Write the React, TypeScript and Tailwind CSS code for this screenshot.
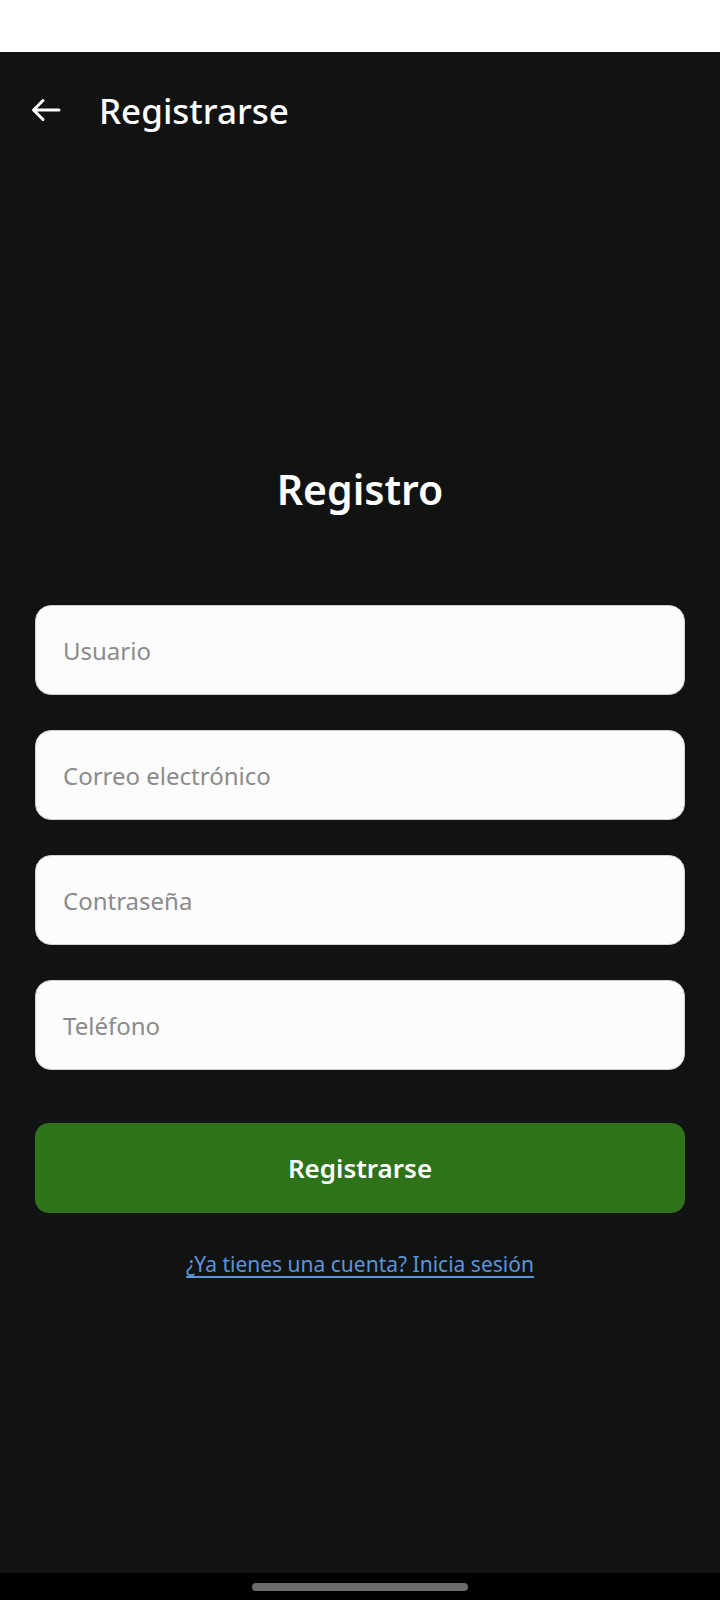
import React from 'react'

const fields = ['Usuario', 'Correo electrónico', 'Contraseña', 'Teléfono']

export default function App() {
  return (
    <div className="flex h-[1600px] w-[720px] flex-col bg-[#111212] font-['Noto_Sans',sans-serif]">
      {/* status bar */}
      <div className="h-[52px] bg-white" />

      <main className="flex flex-1 flex-col">
        {/* app bar */}
        <div className="flex h-[116px] items-center">
          <button className="ml-[31px] flex h-[30px] w-[30px] items-center justify-center">
            <svg width="30" height="24" viewBox="0 0 30 24" fill="none">
              <path
                d="M28 12H3M12 2.5L2.5 12L12 21.5"
                stroke="white"
                strokeWidth="3"
                strokeLinecap="round"
                strokeLinejoin="round"
              />
            </svg>
          </button>
          <h1 className="ml-[38px] text-[35px] font-medium leading-none text-white">
            Registrarse
          </h1>
        </div>

        <h2 className="mt-[295px] text-center text-[41px] font-semibold leading-[52px] text-white">
          Registro
        </h2>

        <form className="mx-[35px] mt-[90px] flex flex-col gap-[35px]">
          {fields.map((f) => (
            <input
              key={f}
              placeholder={f}
              type={f === 'Contraseña' ? 'password' : 'text'}
              className="h-[90px] w-full rounded-[16px] border border-[#cfcfcf] bg-[#fcfcfc] pl-[27px] text-[24px] text-[#222] outline-none placeholder:text-[#8b8b8b]"
            />
          ))}

          <button
            type="button"
            className="mt-[18px] h-[90px] w-full rounded-[14px] bg-[#2e721a] text-[26px] font-semibold text-white"
          >
            Registrarse
          </button>
        </form>

        <a
          href="#"
          className="mt-[36px] self-center text-[21px] leading-[30px] text-[#5b95d8] underline underline-offset-[4px]"
        >
          ¿Ya tienes una cuenta? Inicia sesión
        </a>
      </main>

      {/* navigation bar */}
      <div className="flex h-[27px] justify-center bg-black pt-[10px]">
        <div className="h-[8px] w-[216px] rounded-full bg-[#6b6b6b]" />
      </div>
    </div>
  )
}
